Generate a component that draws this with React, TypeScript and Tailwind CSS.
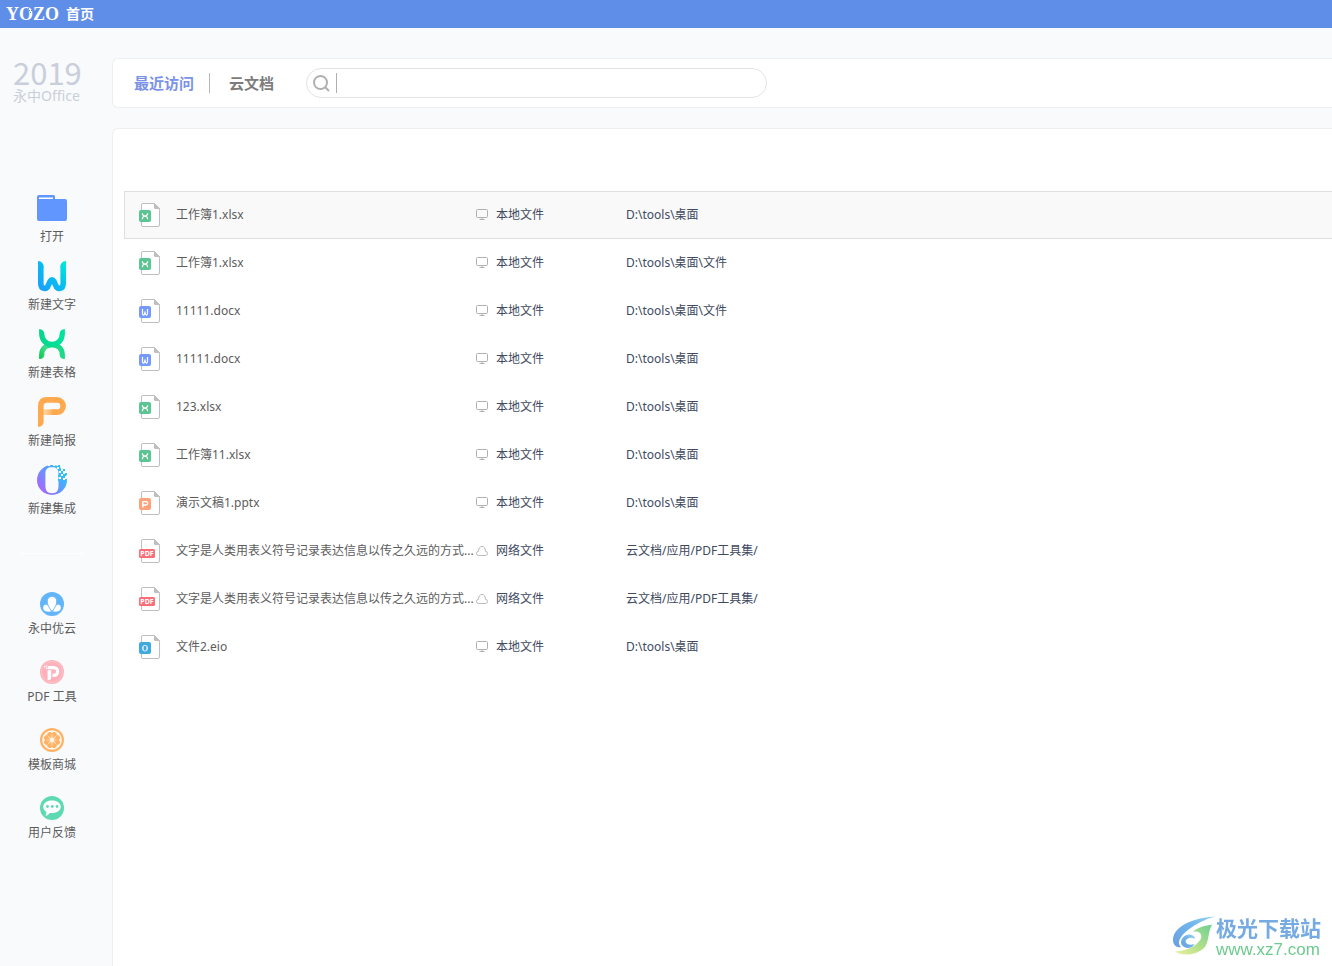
import React, { useState } from "react";

type FileKind = "xlsx" | "docx" | "pptx" | "pdf" | "eio";

interface RecentFile {
  id: number;
  name: string;
  kind: FileKind;
  isCloud: boolean;
  path: string;
}

const LONG_NAME = "文字是人类用表义符号记录表达信息以传之久远的方式...";

const recentFiles: RecentFile[] = [
  { id: 1, name: "工作簿1.xlsx", kind: "xlsx", isCloud: false, path: "D:\\tools\\桌面" },
  { id: 2, name: "工作簿1.xlsx", kind: "xlsx", isCloud: false, path: "D:\\tools\\桌面\\文件" },
  { id: 3, name: "11111.docx", kind: "docx", isCloud: false, path: "D:\\tools\\桌面\\文件" },
  { id: 4, name: "11111.docx", kind: "docx", isCloud: false, path: "D:\\tools\\桌面" },
  { id: 5, name: "123.xlsx", kind: "xlsx", isCloud: false, path: "D:\\tools\\桌面" },
  { id: 6, name: "工作簿11.xlsx", kind: "xlsx", isCloud: false, path: "D:\\tools\\桌面" },
  { id: 7, name: "演示文稿1.pptx", kind: "pptx", isCloud: false, path: "D:\\tools\\桌面" },
  { id: 8, name: LONG_NAME, kind: "pdf", isCloud: true, path: "云文档/应用/PDF工具集/" },
  { id: 9, name: LONG_NAME, kind: "pdf", isCloud: true, path: "云文档/应用/PDF工具集/" },
  { id: 10, name: "文件2.eio", kind: "eio", isCloud: false, path: "D:\\tools\\桌面" },
];

function FolderIcon() {
  return (
    <svg width="32" height="32" viewBox="0 0 32 32" aria-hidden="true">
      <path
        d="M3 3h14.5a1.5 1.5 0 0 1 1.5 1.5V7h10a2 2 0 0 1 2 2v18a2 2 0 0 1-2 2H3a2 2 0 0 1-2-2V5a2 2 0 0 1 2-2z"
        fill="#6196ff"
      />
      <path d="M3 5.5h14V7H3z" fill="#fff" />
    </svg>
  );
}

function WordIcon() {
  return (
    <svg width="32" height="32" viewBox="0 0 32 32" aria-hidden="true">
      <defs>
        <linearGradient id="word" gradientUnits="userSpaceOnUse" x1="4" y1="28" x2="30" y2="4">
          <stop offset="0" stopColor="#1aa0fb" />
          <stop offset="0.5" stopColor="#07bdf0" />
          <stop offset="1" stopColor="#00e8d8" />
        </linearGradient>
      </defs>
      <path
        d="M4.8 6V23.5C4.8 29.5 10.6 29.8 12.2 25.5L14 21.5Q16 18 18 21.5L19.8 25.5C21.4 29.8 27.2 29.5 27.2 23.5V6"
        fill="none"
        stroke="url(#word)"
        strokeWidth="5.6"
      />
      <path d="M2 1Q7.6 1.5 7.6 7H2zM30 1Q24.4 1.5 24.4 7H30z" fill="url(#word)" />
    </svg>
  );
}

function SheetIcon() {
  return (
    <svg width="32" height="32" viewBox="0 0 32 32" aria-hidden="true">
      <defs>
        <linearGradient id="sheetLow" gradientUnits="userSpaceOnUse" x1="4" y1="30" x2="28" y2="16">
          <stop offset="0" stopColor="#0ccb4f" />
          <stop offset="0.35" stopColor="#3fdc8a" />
          <stop offset="1" stopColor="#0bd98a" />
        </linearGradient>
        <linearGradient id="sheetTop" x1="0" y1="0" x2="1" y2="0">
          <stop offset="0" stopColor="#06d68c" />
          <stop offset="1" stopColor="#02e39d" />
        </linearGradient>
      </defs>
      <path
        d="M5.7 27C5.7 20.5 10 17 16 17C22 17 26.3 20.5 26.3 27"
        fill="none"
        stroke="url(#sheetLow)"
        strokeWidth="5.2"
      />
      <path d="M3.1 31V26.5H8.3Q8.3 31 3.1 31zM28.9 31V26.5H23.7Q23.7 31 28.9 31z" fill="url(#sheetLow)" />
      <path
        d="M5.7 5.4C5.7 12 10 16.4 16 16.4C22 16.4 26.3 12 26.3 5.4"
        fill="none"
        stroke="url(#sheetTop)"
        strokeWidth="5.2"
      />
      <path d="M3.1 1V6H8.3Q8.3 1.3 3.1 1zM28.9 1V6H23.7Q23.7 1.3 28.9 1z" fill="url(#sheetTop)" />
    </svg>
  );
}

function SlidesIcon() {
  return (
    <svg width="32" height="32" viewBox="0 0 32 32" aria-hidden="true">
      <defs>
        <linearGradient id="slides" gradientUnits="userSpaceOnUse" x1="7" y1="0" x2="18" y2="0">
          <stop offset="0" stopColor="#ffd9a8" />
          <stop offset="1" stopColor="#ffa94f" />
        </linearGradient>
      </defs>
      <path d="M7 16.2H21" fill="none" stroke="url(#slides)" strokeWidth="5.6" />
      <path
        d="M4.8 26V10Q4.8 3.9 11 3.9H21A6.15 6.15 0 0 1 21 16.2H16"
        fill="none"
        stroke="#ffa94f"
        strokeWidth="5.6"
      />
      <path d="M2 31V25.5H7.6Q7.4 30.5 2 31z" fill="#ffa94f" />
    </svg>
  );
}

function SuiteIcon() {
  return (
    <svg width="32" height="32" viewBox="0 0 32 32" aria-hidden="true">
      <defs>
        <linearGradient id="suite" gradientUnits="userSpaceOnUse" x1="4" y1="26" x2="28" y2="8">
          <stop offset="0" stopColor="#a866ff" />
          <stop offset="0.5" stopColor="#6594fd" />
          <stop offset="1" stopColor="#2cc4f6" />
        </linearGradient>
      </defs>
      <path
        fillRule="evenodd"
        d="M16 1a15 15 0 1 0 0 30a15 15 0 1 0 0-30zM16 3.2C20.5 3.2 22.4 5 22.5 9V22C22.4 27 20.5 29.2 16 29.2C11.5 29.2 9.6 27 9.4 22V9C9.6 5 11.5 3.2 16 3.2z"
        fill="url(#suite)"
      />
      <path
        d="M12 1h2v1h-2zM17 1h2v1h-2zM21 3h2v2h-2zM25 4h4v3h-4zM23 7h2v2h-2zM27 7h4v3h-4zM25 10h2v2h-2zM29 12h3v3h-3zM23 13h2v2h-2zM27 14h2v2h-2zM23 1h4v2h-4z"
        fill="#f9fafc"
      />
      <path d="M22 1h2v2h-2zM27 5h2v2h-2zM25 7h2v2h-2zM29 9h2v2h-2zM27 11h2v2h-2zM22 11h2v2h-2zM22 15h2v2h-2z" fill="#2cc4f6" />
    </svg>
  );
}

function CloudServiceIcon() {
  return (
    <svg width="24" height="24" viewBox="0 0 24 24" aria-hidden="true">
      <circle cx="12" cy="12" r="12" fill="#63b5f9" />
      <g fill="#fff" stroke="#63b5f9" strokeWidth="0.8">
        <path
          d="M11.5 19.8C7.5 20.6 2.8 19.8 2.8 15.8C2.9 12.8 5.6 11.4 8 13C9 14.5 11 17.5 11.5 19.8zM12.5 19.8C16.5 20.6 21.2 19.8 21.2 15.8C21.1 12.8 18.4 11.4 16 13C15 14.5 13 17.5 12.5 19.8z"
        />
        <path d="M12 19.5C8.5 15.5 7.3 12 7.3 9a4.7 4.6 0 0 1 9.4 0C16.7 12 15.5 15.5 12 19.5z" />
      </g>
    </svg>
  );
}

function PdfToolIcon() {
  return (
    <svg width="24" height="24" viewBox="0 0 24 24" aria-hidden="true">
      <circle cx="12" cy="12" r="12" fill="#fdb2bb" />
      <circle cx="12" cy="12" r="10.5" fill="none" stroke="#fec5cb" strokeWidth="1" />
      <path d="M8 7.6H13.8A3.9 3.9 0 0 1 13.8 15.4H12.5" fill="none" stroke="#fff" strokeWidth="3.2" />
      <path d="M7.6 10.2H11.2V18Q11 20.2 7.6 20.2z" fill="#fff" />
      <path d="M4 6h1.5v1.5H4zM6 7.5h1.5V9H6zM6 5.5h1.5v1H6z" fill="#fff" />
    </svg>
  );
}

function TemplateIcon() {
  const segments = [0, 45, 90, 135, 180, 225, 270, 315];
  return (
    <svg width="24" height="24" viewBox="0 0 24 24" aria-hidden="true">
      <circle cx="12" cy="12" r="12" fill="#ffb265" />
      <circle cx="12" cy="12" r="9.8" fill="#fff8ee" />
      {segments.map((angle) => (
        <path
          key={angle}
          d="M12 10.4L9.5 6Q9.2 3.8 12 3.6Q14.8 3.8 14.5 6z"
          fill="#ffb265"
          transform={`rotate(${angle + 22.5} 12 12)`}
        />
      ))}
    </svg>
  );
}

function FeedbackIcon() {
  return (
    <svg width="24" height="24" viewBox="0 0 24 24" aria-hidden="true">
      <circle cx="12" cy="12" r="12" fill="#5fd9b1" />
      <path
        d="M12 4.5c5 0 8.8 2.6 8.8 6.3s-3.8 6.3-8.8 6.3c-.8 0-1.6 0-2.3-.2C8.8 18.5 7.3 19.6 5.2 19.8c.9-1 1.3-2.4 1.1-3.9C4.4 14.7 3.2 12.9 3.2 10.8 3.2 7.1 7 4.5 12 4.5z"
        fill="#fff"
      />
      <g fill="#5fd9b1">
        <circle cx="7.5" cy="10.5" r="1.4" />
        <circle cx="12.3" cy="10.5" r="1.4" />
        <circle cx="17" cy="10.5" r="1.4" />
      </g>
    </svg>
  );
}

function FileBadge({ kind }: { kind: FileKind }) {
  if (kind === "xlsx") {
    return (
      <>
        <rect y="7" width="12" height="12" rx="2" fill="#5cc491" />
        <path
          d="M3.3 10.3C3.5 12.2 4.5 13 6 13S8.5 12.2 8.7 10.3M3.3 16.2C3.5 14.2 4.5 13.2 6 13.2S8.5 14.2 8.7 16.2"
          fill="none"
          stroke="#fff"
          strokeWidth="1.2"
        />
      </>
    );
  }
  if (kind === "docx") {
    return (
      <>
        <rect y="7" width="12" height="12" rx="2" fill="#7699ff" />
        <path
          d="M3.5 10V14.5C3.5 16.5 5.2 16.5 5.5 15L6 13.5L6.5 15C6.8 16.5 8.5 16.5 8.5 14.5V10"
          fill="none"
          stroke="#fff"
          strokeWidth="1.2"
        />
      </>
    );
  }
  if (kind === "pptx") {
    return (
      <>
        <rect y="7" width="12" height="12" rx="2" fill="#ffa27c" />
        <path d="M3.8 16.5V10.6H7a1.7 1.7 0 0 1 0 3.4H4.5" fill="none" stroke="#fff" strokeWidth="1.4" />
      </>
    );
  }
  if (kind === "pdf") {
    return (
      <>
        <rect y="10" width="16" height="9" rx="1.5" fill="#fa6e78" />
        <text
          x="8"
          y="17"
          textAnchor="middle"
          fontSize="7"
          fontWeight="700"
          fill="#fff"
          fontFamily="'Noto Sans', sans-serif"
        >
          PDF
        </text>
      </>
    );
  }
  return (
    <>
      <rect y="7" width="12" height="12" rx="2" fill="#3fa9e0" />
      <ellipse cx="6" cy="13.2" rx="2.5" ry="2.9" fill="none" stroke="#fff" strokeWidth="0.8" />
      <path d="M4.2 11.5V15M7.8 11.5V15" stroke="#fff" strokeWidth="0.7" />
    </>
  );
}

function FileIcon({ kind }: { kind: FileKind }) {
  return (
    <svg width="21" height="24" viewBox="0 0 21 24" className="shrink-0" aria-hidden="true">
      <path
        d="M4 .5H15.5L20.5 5.5V22a1.5 1.5 0 0 1-1.5 1.5H4A1.5 1.5 0 0 1 2.5 22V2A1.5 1.5 0 0 1 4 .5z"
        fill="#fff"
        stroke="#bfbfc1"
      />
      <path d="M15 0L21 6H16.5A1.5 1.5 0 0 1 15 4.5z" fill="#bfbfc1" />
      <FileBadge kind={kind} />
    </svg>
  );
}

function LocationIcon({ isCloud }: { isCloud: boolean }) {
  if (isCloud) {
    return (
      <svg width="12" height="12" viewBox="0 0 12 12" className="shrink-0" aria-hidden="true">
        <path
          d="M2.6 10.5H9.4A2.1 2.1 0 0 0 9.4 6.3C9.4 3.3 8.3 1.5 6 1.5S2.6 3.3 2.6 6.3A2.1 2.1 0 0 0 2.6 10.5z"
          fill="none"
          stroke="#b9b9b9"
        />
      </svg>
    );
  }
  return (
    <svg width="12" height="12" viewBox="0 0 12 12" className="shrink-0" aria-hidden="true">
      <rect x=".5" y=".5" width="11" height="8" rx="1" fill="none" stroke="#b0b0b0" />
      <path d="M6 8.5V10.5M3.5 10.5H8.5" stroke="#b0b0b0" />
    </svg>
  );
}

function SwirlLogo() {
  return (
    <svg width="44" height="40" viewBox="38 48 136 122" aria-hidden="true">
      <defs>
        <linearGradient id="swirlBlue" x1="0" y1="1" x2="1" y2="0">
          <stop offset="0" stopColor="#6b9fe0" />
          <stop offset="0.6" stopColor="#6fb6ec" />
          <stop offset="1" stopColor="#9fd6ef" />
        </linearGradient>
        <linearGradient id="swirlGreen" x1="0" y1="1" x2="1" y2="0">
          <stop offset="0" stopColor="#eef0a0" />
          <stop offset="0.45" stopColor="#b2e08a" />
          <stop offset="1" stopColor="#6fcf94" />
        </linearGradient>
      </defs>
      <path
        d="M172 49C122 50 52 72 42 112C37 134 52 148 66 143C52 132 62 110 88 90C112 72 140 57 172 49z"
        fill="url(#swirlBlue)"
      />
      <path
        d="M110 118C104 100 82 102 72 114C60 128 66 144 86 146C96 146 104 142 107 134C96 138 82 136 80 127C80 116 96 110 110 118z"
        fill="url(#swirlBlue)"
      />
      <path
        d="M162 74C142 76 118 82 102 96C122 92 134 104 126 120C112 142 84 154 48 157C66 172 118 170 140 142C154 122 148 96 162 74z"
        fill="url(#swirlGreen)"
      />
    </svg>
  );
}

const createItems = [
  { label: "打开", icon: <FolderIcon /> },
  { label: "新建文字", icon: <WordIcon /> },
  { label: "新建表格", icon: <SheetIcon /> },
  { label: "新建简报", icon: <SlidesIcon /> },
  { label: "新建集成", icon: <SuiteIcon /> },
];

const serviceItems = [
  { label: "永中优云", icon: <CloudServiceIcon /> },
  { label: "PDF 工具", icon: <PdfToolIcon /> },
  { label: "模板商城", icon: <TemplateIcon /> },
  { label: "用户反馈", icon: <FeedbackIcon /> },
];

function SidebarButton({ label, icon }: { label: string; icon: React.ReactNode }) {
  return (
    <button type="button" className="flex flex-col items-center gap-[5px] cursor-pointer">
      {icon}
      <span className="text-xs leading-4 whitespace-nowrap">{label}</span>
    </button>
  );
}

export default function App() {
  const [tab, setTab] = useState<"recent" | "cloud">("recent");
  const [query, setQuery] = useState<string>("");
  const [selectedId, setSelectedId] = useState<number>(1);

  const files = recentFiles.filter(
    (file) => file.name.includes(query) && (tab === "recent" || file.isCloud)
  );

  return (
    <div className="flex flex-col min-h-screen bg-[#f9fafc] text-[#5c5c5c] font-['Noto_Sans','Noto_Sans_CJK_SC',sans-serif]">
      <header className="flex items-center gap-[7px] h-7 px-1.5 shrink-0 bg-[#5f8ee8] text-white">
        <span className="relative text-lg leading-7 font-bold font-['Liberation_Serif',serif]">
          YOZO
          <svg width="8" height="6" viewBox="0 0 8 6" className="absolute left-5 top-2" aria-hidden="true">
            <path d="M0 1h1v1H0zM2 0h1v1H2zM3 2h1v1H3zM1 3h1v1H1zM5 2h1v1H5zM4 4h1v1H4z" fill="#5f8ee8" />
          </svg>
        </span>
        <a href="#home" className="text-sm font-bold">
          首页
        </a>
      </header>

      <div className="flex flex-1">
        <aside className="flex flex-col items-center w-26 shrink-0 pt-7 pb-8">
          <div className="flex flex-col self-start h-34 pl-[13px] text-[#c9cfda]">
            <span className="text-[31px] leading-8 font-['Noto_Sans_CJK_SC',sans-serif]">2019</span>
            <span className="text-sm leading-4">永中Office</span>
          </div>

          <nav className="flex flex-col items-center gap-[15px]">
            {createItems.map((item) => (
              <SidebarButton key={item.label} label={item.label} icon={item.icon} />
            ))}
          </nav>

          <hr className="w-16 mt-9 border-white" />

          <nav className="flex flex-col items-center gap-[23px] pt-[38px]">
            {serviceItems.map((item) => (
              <SidebarButton key={item.label} label={item.label} icon={item.icon} />
            ))}
          </nav>
        </aside>

        <main className="flex flex-col flex-1 min-w-0 gap-5 pt-[30px] pl-2">
          <div className="flex items-center h-[50px] pl-[21px] bg-white border border-r-0 border-[#eeeff1] rounded-l-md shrink-0">
            <div className="flex items-center text-[15px] font-bold">
              <button
                type="button"
                className={tab === "recent" ? "text-[#7b92e6]" : "text-[#7c7c7c]"}
                onClick={() => setTab("recent")}
              >
                最近访问
              </button>
              <span className="w-px h-5 ml-[15px] mr-[19px] bg-[#b8b8b8]" />
              <button
                type="button"
                className={tab === "cloud" ? "text-[#7b92e6]" : "text-[#7c7c7c]"}
                onClick={() => setTab("cloud")}
              >
                云文档
              </button>
            </div>
            <label className="flex items-center w-[461px] h-[30px] ml-8 pl-1.5 pr-4 border border-[#e3e3e3] rounded-full">
              <svg width="17" height="17" viewBox="0 0 17 17" className="shrink-0" aria-hidden="true">
                <circle cx="7.5" cy="7.5" r="6.5" fill="none" stroke="#b0b0b0" strokeWidth="2" />
                <path d="M12 12L16 16" stroke="#b0b0b0" strokeWidth="2" />
              </svg>
              <span className="w-px h-5 ml-1.5 bg-[#a9b0b8]" />
              <input
                type="text"
                aria-label="搜索"
                className="flex-1 min-w-0 px-2 text-xs bg-transparent outline-none"
                value={query}
                onChange={(e) => setQuery(e.target.value)}
              />
            </label>
          </div>

          <section className="flex-1 pl-[11px] pt-[62px] bg-white border border-r-0 border-b-0 border-[#eeeff1] rounded-tl-md">
            <table className="w-full table-fixed border-separate border-spacing-0 text-xs text-left">
              <colgroup>
                <col className="w-[352px]" />
                <col className="w-[150px]" />
                <col />
              </colgroup>
              <tbody>
                {files.map((file) => {
                  const selected = file.id === selectedId;
                  const cell = selected ? "border-y border-[#dfdfdf] bg-[#f9f9f9]" : "border-y border-transparent";
                  return (
                    <tr key={file.id} className="h-12 cursor-pointer" onClick={() => setSelectedId(file.id)}>
                      <td className={`${cell} p-0 pl-3.5 border-l`}>
                        <div className="flex items-center gap-4">
                          <FileIcon kind={file.kind} />
                          <span className="whitespace-nowrap">{file.name}</span>
                        </div>
                      </td>
                      <td className={`${cell} p-0 text-[#404a60]`}>
                        <div className="flex items-center gap-2">
                          <LocationIcon isCloud={file.isCloud} />
                          <span>{file.isCloud ? "网络文件" : "本地文件"}</span>
                        </div>
                      </td>
                      <td className={`${cell} p-0 text-[#404a60]`}>{file.path}</td>
                    </tr>
                  );
                })}
              </tbody>
            </table>
          </section>
        </main>
      </div>

      <div className="fixed right-[11px] bottom-1.5 flex items-start pointer-events-none">
        <SwirlLogo />
        <div className="flex flex-col">
          <span className="text-[21px] leading-6 font-bold text-[#75abe2]">极光下载站</span>
          <span className="text-[17px] leading-5 text-[#6ccb8d] font-['Liberation_Sans',sans-serif]">www.xz7.com</span>
        </div>
      </div>
    </div>
  );
}
